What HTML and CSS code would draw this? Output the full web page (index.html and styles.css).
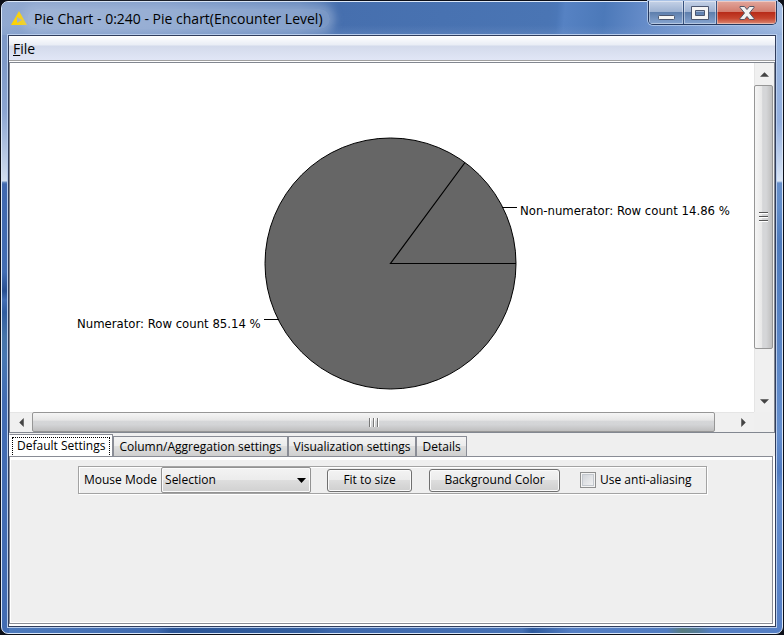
FILE: index.html
```html
<!DOCTYPE html>
<html lang="en">
<head>
<meta charset="utf-8">
<title>Pie Chart</title>
<link rel="stylesheet" href="styles.css">
</head>
<body>
<div class="window">
  <header class="titlebar">
    <svg class="app-icon" width="16" height="15" viewBox="0 0 16 15" aria-hidden="true"><path d="M8 0L16 14H0z" fill="#fdd303"/><path d="M6 6l5 3-5 3z" fill="#a9b4b8"/></svg>
    <h1 class="title">Pie Chart - 0:240 - Pie chart(Encounter Level)</h1>
    <div class="caption">
      <button class="cap cap-min" aria-label="Minimize"><svg width="17" height="5" viewBox="0 0 17 5"><rect x=".5" y=".5" width="16" height="4" rx="1" fill="#f5f5f5" stroke="#4b566f"/></svg></button>
      <button class="cap cap-max" aria-label="Maximize"><svg width="18" height="14" viewBox="0 0 18 14"><path d="M.5.5h17v13H.5zM4.500 4.500v5h9v-5z" fill="#f5f5f5" fill-rule="evenodd" stroke="#4b566f"/></svg></button>
      <button class="cap cap-close" aria-label="Close"><svg width="16" height="14" viewBox="0 0 16 14"><path d="M1 .5h4.500L8 3.500l2.500-3H15v1L10.500 7l4.500 5.500v1h-4.500L8 10.500l-2.500 3H1v-1L5.500 7 1 1.500z" fill="#f2f2f2" stroke="#535666"/></svg></button>
    </div>
  </header>
  <main class="client">
    <nav class="menubar"><button class="menu"><u>F</u>ile</button></nav>
    <section class="scrollpane">
      <div class="viewport">
        <svg class="chart" width="744" height="349" viewBox="0 0 744 349" role="img" aria-label="Pie chart">
          <circle cx="380.500" cy="200.500" r="125.500" fill="#666" stroke="#000"/>
          <path d="M506 200.500H380.500L455 99.500M492 144.500h15M254 256.500h15" fill="none" stroke="#000" stroke-width="1.200"/>
          <text x="510" y="152">Non-numerator: Row count 14.86 %</text>
          <text x="67" y="265">Numerator: Row count 85.14 %</text>
        </svg>
      </div>
      <div class="vbar">
        <button class="arrow" aria-label="Scroll up"><svg width="9" height="5" viewBox="0 0 10 5"><path d="M0 5l5-5 5 5z"/></svg></button>
        <div class="vthumb"><i></i><i></i><i></i></div>
        <button class="arrow" aria-label="Scroll down"><svg width="9" height="5" viewBox="0 0 10 5"><path d="M0 0l5 5 5-5z"/></svg></button>
      </div>
      <div class="hbar">
        <button class="arrow" aria-label="Scroll left"><svg width="5" height="9" viewBox="0 0 5 10"><path d="M5 0L0 5l5 5z"/></svg></button>
        <div class="hthumb"><i></i><i></i><i></i></div>
        <button class="arrow arrow-right" aria-label="Scroll right"><svg width="5" height="9" viewBox="0 0 5 10"><path d="M0 0l5 5-5 5z"/></svg></button>
      </div>
    </section>
    <div class="tabs" role="tablist">
      <button class="tab selected" role="tab" aria-selected="true"><span>Default Settings</span></button>
      <button class="tab" role="tab">Column/Aggregation settings</button>
      <button class="tab" role="tab">Visualization settings</button>
      <button class="tab" role="tab">Details</button>
    </div>
    <section class="panel">
      <div class="tools">
        <label for="mode">Mouse Mode</label>
        <span class="combo"><select id="mode"><option>Selection</option></select><svg width="9" height="5" viewBox="0 0 9 5"><path d="M0 0h9L4.500 5z"/></svg></span>
        <button class="push fit">Fit to size</button>
        <button class="push color">Background Color</button>
        <input type="checkbox" id="aa"><label for="aa">Use anti-aliasing</label>
      </div>
    </section>
  </main>
</div>
</body>
</html>
```

FILE: styles.css
```css
* { box-sizing: border-box; }
html { background: #0c0f18; }
body {
  margin: 0;
  color: #000;
  font: 12px/16px "Open Sans", sans-serif;
}
button, select, input { margin: 0; padding: 0; font: inherit; color: inherit; }

.window {
  min-height: calc(100vh - 2px);
  margin: 1px;
  display: flex;
  flex-direction: column;
  padding: 0 6px 6px;
  border: 1px solid #dce8f8;
  border-radius: 7px;
  background:
    linear-gradient(#7e99c8 60px, #8ca5d1 110px, #d2deef 179px, #7092c2 180px, #4068af 182px, #426db3 270px, #274e90 289px, #426db3 298px, #305ca0 310px, #4674a9 335px, #4777b1 355px, #426cb3 400px) left / 7px 100% no-repeat,
    linear-gradient(#99b5df 60px, #94b0df 120px, #d9e5f5 179px, #678fc9 181px, #638eca 205px, #4f7bbc 240px, #658fce 430px, #507bc0 470px, #648dce 490px, #557fc5) right / 8px 100% no-repeat,
    linear-gradient(90deg, #4e7bbd, #406aaf 155px, #2b5597 170px, #345f9f 310px, #3e68ac 330px, #4772b5 520px, #2e5a9d 530px, #557fc4 570px, #517cc1 665px, #597d80 680px, #547b96 695px, #557fc4 710px);
}

.titlebar {
  height: 33px;
  margin: 0 -6px;
  padding-left: 9px;
  display: flex;
  align-items: center;
  border-radius: 6px 6px 0 0;
  background:
    linear-gradient(transparent 70%, #7696c855),
    linear-gradient(95deg, #91a9d0, #829ecb 20%, #6588bd 38%, #466fae 43%, #4a75b4 70%, #4b77b7 71%, #5682c3 72%, #4c79b9 77%, #648bc8 82%, #94b0dd 94%, #a5bee3);
}
.app-icon { flex: none; }
.title {
  margin: 0;
  padding: 0 7px;
  border-radius: 10px;
  font: 14px/20px "Open Sans", sans-serif;
  white-space: nowrap;
  background: #b5c6e16b;
  box-shadow: 0 0 8px 5px #b5c6e16b;
}
.caption {
  display: flex;
  align-self: flex-start;
  margin: -1px 5px 0 auto;
  border: 1px solid #26395f;
  border-top: 0;
  border-radius: 0 0 5px 5px;
  box-shadow: 0 0 0 1px #a9c2e6;
  overflow: hidden;
}
.cap {
  height: 23px;
  display: flex;
  align-items: center;
  justify-content: center;
  border: 0;
  border-right: 1px solid #36527f;
  background: linear-gradient(#c5d2e7, #9cb1d1 48%, #5e7fad 50%, #86a4d0);
  box-shadow: inset 0 0 0 1px #ffffff66;
}
.cap-min { width: 35px; padding-top: 9px; }
.cap-max { width: 33px; }
.cap-close {
  width: 59px;
  border-right: 0;
  background: linear-gradient(#e2a79d, #d27b6c 48%, #b82c19 50%, #c6442d 75%, #dc8a76);
}

.client {
  flex: 1;
  display: flex;
  flex-direction: column;
  border: 1px solid #303d5c;
  outline: 1px solid #b9cdec;
  background: #efefef;
}
.menubar {
  height: 25px;
  border-bottom: 1px solid #a0a0a0;
  background: linear-gradient(#fff, #e9edf5 9px, #d3daeb 10px, #e1e6f6);
}
.menu {
  padding: 3px 4px 0;
  border: 0;
  background: none;
  font: 14px/20px "Open Sans", sans-serif;
}
.scrollpane {
  display: grid;
  grid-template-columns: minmax(0, 1fr) 20px;
  grid-template-rows: auto 20px;
  margin-top: 1px;
  border: 1px solid #828790;
  box-shadow: 0 -1px #fff;
}
.viewport { background: #fff; overflow: hidden; }
.chart { display: block; }
.chart text { font-family: "DejaVu Sans Condensed", "DejaVu Sans", sans-serif; font-size: 13px; }
.vbar, .hbar { display: flex; background: #f0f0f0; }
.vbar { flex-direction: column; border-left: 1px solid #e5e5e5; }
.hbar { border-top: 1px solid #e5e5e5; }
.arrow {
  flex: none;
  display: flex;
  align-items: center;
  justify-content: center;
  width: 18px;
  height: 22px;
  border: 0;
  background: none;
  fill: #444;
}
.hbar .arrow { width: 22px; height: 18px; }
.vthumb, .hthumb {
  display: flex;
  align-items: center;
  justify-content: center;
  gap: 2px;
  border: 1px solid #969696;
  border-radius: 2px;
}
.vthumb {
  height: 264px;
  margin: 0 1px 0 -1px;
  flex-direction: column;
  background: linear-gradient(90deg, #f5f5f5, #e8e8e8 40%, #d5d6d8 45%, #d5d6d8 65%, #bebebe);
}
.vbar .arrow:last-child { margin-top: auto; }
.hthumb {
  flex: 1;
  margin-top: -1px;
  background: linear-gradient(#f5f5f5, #e6e6e6 40%, #d5d6d8 45%, #d3d4d6 65%, #bebebe);
}
.hbar .arrow-right { margin-left: 17px; }
.vthumb i { width: 9px; height: 2px; background: linear-gradient(#555 50%, #fff 50%); }
.hthumb i { width: 2px; height: 9px; background: linear-gradient(90deg, #777 50%, #fff 50%); }

.tabs { display: flex; align-items: flex-end; height: 23px; padding-top: 1px; }
.tab {
  height: 20px;
  padding: 1px 5px 0;
  border: 1px solid #898c95;
  border-bottom: 0;
  background: linear-gradient(#f3f3f3, #ececec 45%, #dedede 50%, #cfcfcf);
  white-space: nowrap;
}
.tab.selected {
  position: relative;
  height: 24px;
  margin-bottom: -2px;
  padding: 2px;
  border-left-color: #fff;
  background: #fff;
}
.tab.selected span { display: block; height: 20px; padding: 0 4px; border: 1px dotted #000; line-height: 16px; }
.panel {
  flex: 1;
  margin: 0 2px 2px 0;
  padding: 9px 66px 0 68px;
  border: 1px solid #898c95;
  outline: 2px solid #fff;
  box-shadow: inset 0 3px #fff, inset 1px -1px #fff;
  clip-path: inset(0 -2px -2px 0);
}
.tools {
  display: flex;
  align-items: center;
  width: fit-content;
  height: 28px;
  margin: 0 auto;
  padding: 0 14px 0 5px;
  border: 1px solid #a3a3a3;
  box-shadow: inset 1px 1px #fff, 1px 1px #fff;
  white-space: nowrap;
}
.combo { display: grid; align-items: center; width: 150px; height: 26px; margin: 0 16px 0 4px; }
.combo select {
  grid-area: 1 / 1;
  width: 100%;
  height: 26px;
  padding: 0 3px;
  appearance: none;
  border: 1px solid #929292;
  border-radius: 2px;
  background: linear-gradient(#f3f3f3, #ececec 48%, #dedede 50%, #d0d0d0);
  box-shadow: inset 0 0 0 1px #fafafa;
}
.combo svg { grid-area: 1 / 1; justify-self: end; margin-right: 5px; pointer-events: none; }
.push {
  height: 23px;
  border: 1px solid #707070;
  border-radius: 3px;
  background: linear-gradient(#f3f3f3, #ebebeb 48%, #dddddd 50%, #cfcfcf);
  box-shadow: inset 0 0 0 1px #fafafa;
}
.fit { width: 85px; margin-right: 17px; }
.color { width: 131px; margin-right: 20px; }
.tools input {
  width: 16px;
  height: 16px;
  margin-right: 4px;
  appearance: none;
  border: 1px solid #8e8f8f;
  background: linear-gradient(135deg, #cbcfd5, #f6f6f6);
  box-shadow: inset 0 0 0 1px #f4f4f4, inset 0 0 0 2px #c3c8ce;
}
```
